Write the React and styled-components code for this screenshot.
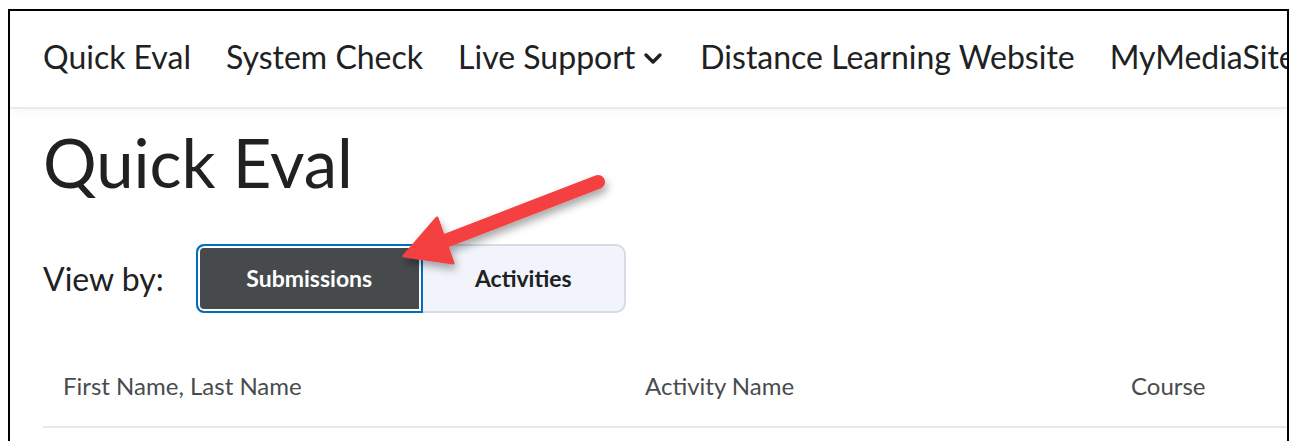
import React from 'react';
import styled, { createGlobalStyle } from 'styled-components';

const GlobalStyle = createGlobalStyle`
  html, body {
    margin: 0;
    padding: 0;
    background: #fff;
    overflow: hidden;
  }
  body {
    font-family: Lato, "Open Sans", "Liberation Sans", sans-serif;
    color: #202122;
  }
`;

const Frame = styled.div`
  position: relative;
  margin: 9px 0 0 8px;
  width: 1277px;
  height: 440px;
  border: 2px solid #000;
  border-bottom: none;
  overflow: hidden;
`;

const NavBar = styled.nav`
  display: flex;
  align-items: center;
  gap: 35px;
  height: 90px;
  padding: 0 0 6px 33px;
  white-space: nowrap;
  border-bottom: 2px solid #ebebeb;
  box-shadow: 0 6px 6px -2px rgba(0, 0, 0, 0.03);
`;

const NavLink = styled.span`
  display: inline-flex;
  align-items: center;
  gap: 6px;
  font-size: 32px;
  color: #202122;
`;

const Main = styled.main`
  padding: 13px 0 0 33px;
`;

const Title = styled.h1`
  margin: 0;
  font-size: 67px;
  font-weight: 400;
  line-height: 1.2;
  color: #202122;
`;

const ViewRow = styled.div`
  display: flex;
  align-items: center;
  gap: 32px;
  margin-top: 42px;
`;

const ViewLabel = styled.span`
  font-size: 32px;
  color: #202122;
`;

const Toggle = styled.div`
  display: flex;
  height: 69px;
`;

const ToggleButton = styled.button`
  width: ${p => p.$width}px;
  height: 100%;
  padding-bottom: 3px;
  font-family: inherit;
  font-size: 23px;
  font-weight: 700;
  cursor: pointer;
  color: ${p => (p.$active ? '#fff' : '#202122')};
  background: ${p => (p.$active ? '#464a4d' : '#f1f5fb')};
  border: ${p => (p.$active ? '2px solid #006fbf' : '2px solid #d6dce5')};
  border-left: ${p => (p.$active ? '2px solid #006fbf' : 'none')};
  border-radius: ${p => (p.$active ? '8px 0 0 8px' : '0 10px 10px 0')};
  box-shadow: ${p => (p.$active ? 'inset 0 0 0 2px #fff' : 'none')};
`;

const TableHead = styled.div`
  display: grid;
  grid-template-columns: 582px 486px 1fr;
  align-items: center;
  margin-top: 31px;
  height: 82px;
  padding-left: 20px;
  border-bottom: 2px solid #e3e9f1;
`;

const HeadCell = styled.span`
  font-size: 24px;
  color: #494c4e;
`;

const ArrowLayer = styled.svg`
  position: absolute;
  left: 0;
  top: 0;
  pointer-events: none;
`;

const Chevron = () => (
  <svg width="24" height="16" viewBox="0 0 24 16" style={{ marginTop: 6 }}>
    <path d="M5 4 L12 11 L19 4" fill="none" stroke="#202122" strokeWidth="3.5" strokeLinecap="round" strokeLinejoin="round" />
  </svg>
);

const PointerArrow = () => (
  <ArrowLayer width="1277" height="440" viewBox="0 0 1277 440">
    <defs>
      <filter id="arrowShadow" x="-20%" y="-20%" width="140%" height="160%">
        <feDropShadow dx="2" dy="5" stdDeviation="4" floodColor="#000" floodOpacity="0.35" />
      </filter>
    </defs>
    <g filter="url(#arrowShadow)" transform="translate(-10 -11)">
      <line x1="598" y1="182" x2="440" y2="243" stroke="#f4403f" strokeWidth="14" strokeLinecap="round" />
      <path d="M404 256 L437 218 L453 263 Z" fill="#f4403f" stroke="#f4403f" strokeWidth="3" strokeLinejoin="round" />
    </g>
  </ArrowLayer>
);

export default function App() {
  return (
    <>
      <GlobalStyle />
      <Frame>
        <NavBar>
          <NavLink>Quick Eval</NavLink>
          <NavLink>System Check</NavLink>
          <NavLink>Live Support <Chevron /></NavLink>
          <NavLink>Distance Learning Website</NavLink>
          <NavLink>MyMediaSite</NavLink>
        </NavBar>
        <Main>
          <Title>Quick Eval</Title>
          <ViewRow>
            <ViewLabel>View by:</ViewLabel>
            <Toggle>
              <ToggleButton $active $width={227}>Submissions</ToggleButton>
              <ToggleButton $width={203}>Activities</ToggleButton>
            </Toggle>
          </ViewRow>
          <TableHead>
            <HeadCell>First Name, Last Name</HeadCell>
            <HeadCell>Activity Name</HeadCell>
            <HeadCell>Course</HeadCell>
          </TableHead>
        </Main>
        <PointerArrow />
      </Frame>
    </>
  );
}
